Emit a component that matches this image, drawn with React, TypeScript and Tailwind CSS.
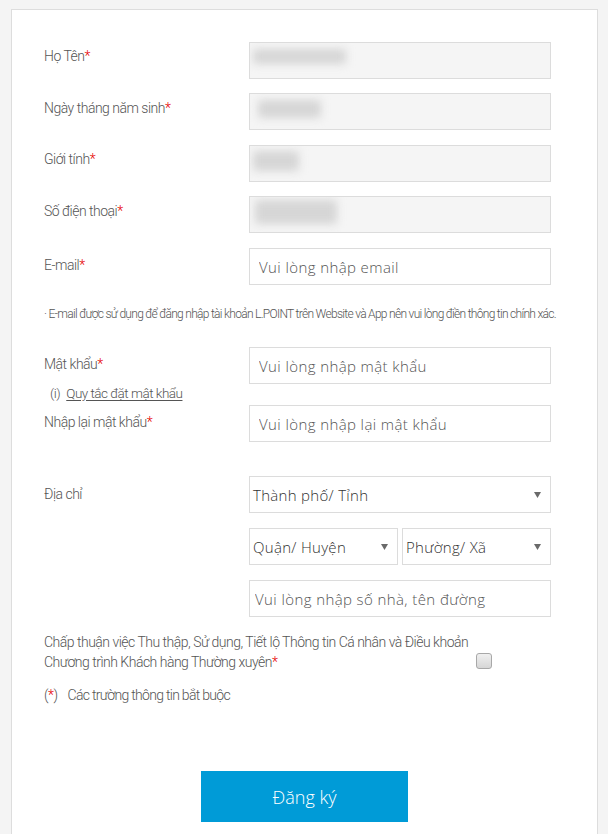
import React from "react";

const NARROW = "font-['Roboto','Liberation_Sans',Arial,sans-serif]";
const WIDE = "font-['Open_Sans','Liberation_Sans',Arial,sans-serif]";

function Star() {
  return <span className="text-[#e60000]">*</span>;
}

function Arrow() {
  return (
    <svg width="7" height="6" viewBox="0 0 7 6" className="shrink-0">
      <path d="M0 0 L7 0 L3.5 6 Z" fill="#6a6a6a" />
    </svg>
  );
}

function Blurred({ box }: { box: string }) {
  return (
    <div className="w-[302px] h-[37px] border border-[#dcdcdc] bg-[#f5f5f5] overflow-hidden">
      <div className={`${box} bg-[#d6d6d6] blur-[4px] rounded-[2px]`} />
    </div>
  );
}

function TextInput({ placeholder, pad }: { placeholder: string; pad: string }) {
  return (
    <input
      placeholder={placeholder}
      className={`w-[302px] h-[37px] border border-[#dcdcdc] bg-white ${pad} text-[15px] font-light text-[#444] placeholder:text-[#555] outline-none ${WIDE} tracking-[0.4px]`}
    />
  );
}

function SelectBox({ label, width }: { label: string; width: string }) {
  return (
    <div
      className={`${width} h-[37px] border border-[#dcdcdc] bg-white flex items-center justify-between pl-[3px] pr-[9px] text-[15px] font-light text-[#333] ${WIDE} tracking-[0.3px]`}
    >
      <span>{label}</span>
      <Arrow />
    </div>
  );
}

export default function App() {
  return (
    <div className={`min-h-screen bg-[#f4f4f4] pt-[9px] ${NARROW}`}>
      <div className="ml-[11px] w-[587px] border border-[#dddddd] bg-white pt-[32px] px-[32px] pb-[40px] text-[#555] font-light text-[14px] leading-[20px] tracking-[-0.5px]">
        {/* Họ Tên */}
        <div className="flex">
          <div className="w-[205px] shrink-0 pt-[4px]">
            Họ Tên<Star />
          </div>
          <Blurred box="ml-[3px] mt-[6px] w-[93px] h-[15px]" />
        </div>
        {/* Ngày tháng năm sinh */}
        <div className="flex mt-[14px]">
          <div className="w-[205px] shrink-0 pt-[5px]">
            Ngày tháng năm sinh<Star />
          </div>
          <Blurred box="ml-[8px] mt-[6px] w-[63px] h-[18px]" />
        </div>
        {/* Giới tính */}
        <div className="flex mt-[15px]">
          <div className="w-[205px] shrink-0 pt-[4px]">
            Giới tính<Star />
          </div>
          <Blurred box="ml-[3px] mt-[5px] w-[46px] h-[20px]" />
        </div>
        {/* Số điện thoại */}
        <div className="flex mt-[14px]">
          <div className="w-[205px] shrink-0 pt-[5px]">
            Số điện thoại<Star />
          </div>
          <Blurred box="ml-[5px] mt-[3px] w-[82px] h-[24px]" />
        </div>
        {/* E-mail */}
        <div className="flex mt-[15px]">
          <div className="w-[205px] shrink-0 pt-[7px]">
            E-mail<Star />
          </div>
          <TextInput placeholder="Vui lòng nhập email" pad="px-[9px]" />
        </div>
        <p className="mt-[21px] text-[12px] leading-[16px] tracking-[-0.7px] whitespace-nowrap">
          · E-mail được sử dụng để đăng nhập tài khoản L.POINT trên Website và App nên vui lòng điền thông tin chính xác.
        </p>
        {/* Mật khẩu */}
        <div className="flex mt-[25px]">
          <div className="w-[205px] shrink-0 pt-[7px]">
            <div>
              Mật khẩu<Star />
            </div>
            <div className="mt-[9px] pl-[6px] text-[13.5px] flex gap-[6px]">
              <span>(i)</span>
              <span className="underline underline-offset-2">Quy tắc đặt mật khẩu</span>
            </div>
          </div>
          <TextInput placeholder="Vui lòng nhập mật khẩu" pad="px-[9px]" />
        </div>
        {/* Nhập lại mật khẩu */}
        <div className="flex mt-[2px]">
          <div className="w-[205px] shrink-0 pt-[7px]">
            Nhập lại mật khẩu<Star />
          </div>
          <TextInput placeholder="Vui lòng nhập lại mật khẩu" pad="px-[9px]" />
        </div>
        {/* Địa chỉ */}
        <div className="flex mt-[34px]">
          <div className="w-[205px] shrink-0 pt-[8px]">Địa chỉ</div>
          <div className="flex flex-col gap-[15px]">
            <SelectBox label="Thành phố/ Tỉnh" width="w-[302px]" />
            <div className="flex gap-[4px]">
              <SelectBox label="Quận/ Huyện" width="w-[149px]" />
              <SelectBox label="Phường/ Xã" width="w-[149px]" />
            </div>
            <TextInput placeholder="Vui lòng nhập số nhà, tên đường" pad="px-[5px]" />
          </div>
        </div>
        {/* Consent */}
        <div className="flex mt-[15px]">
          <div className="w-[432px] shrink-0 whitespace-nowrap">
            Chấp thuận việc Thu thập, Sử dụng, Tiết lộ Thông tin Cá nhân và Điều khoản
            <br />
            Chương trình Khách hàng Thường xuyên<Star />
          </div>
          <div className="mt-[21px] w-[16px] h-[16px] rounded-[3px] border border-[#a8a8a8] bg-linear-to-b from-[#f0f0f0] to-[#d6d6d6]" />
        </div>
        {/* Required */}
        <div className="mt-[13px] flex gap-[10px]">
          <span>
            (<Star />)
          </span>
          <span className="tracking-[-0.7px]">Các trường thông tin bắt buộc</span>
        </div>
        {/* Button */}
        <div className="mt-[66px] flex justify-center">
          <button className={`w-[207px] h-[51px] bg-[#009bd7] text-white text-[18px] font-light ${WIDE} tracking-[0px]`}>
            Đăng ký
          </button>
        </div>
      </div>
    </div>
  );
}
